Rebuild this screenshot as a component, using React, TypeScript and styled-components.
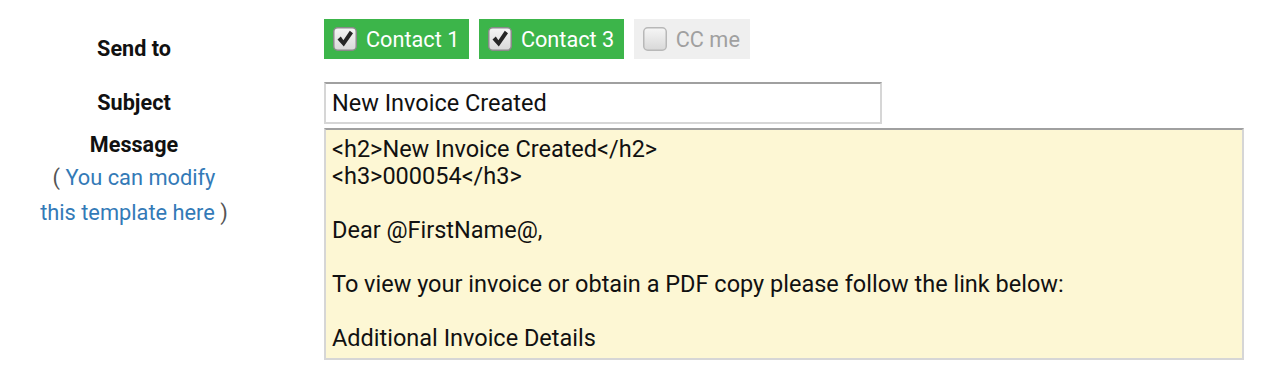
import React from "react";
import styled, { createGlobalStyle } from "styled-components";

const GlobalStyle = createGlobalStyle`
  body {
    margin: 0;
    background: #ffffff;
    font-family: Roboto, "Liberation Sans", Arial, sans-serif;
  }
`;

const MESSAGE = [
  "<h2>New Invoice Created</h2>",
  "<h3>000054</h3>",
  "",
  "Dear @FirstName@,",
  "",
  "To view your invoice or obtain a PDF copy please follow the link below:",
  "",
  "Additional Invoice Details",
].join("\n");

const recipients = [
  { name: "Contact 1", checked: true },
  { name: "Contact 3", checked: true },
  { name: "CC me", checked: false },
];

const CheckBox = ({ checked }: { checked: boolean }) => (
  <svg width="24" height="24" viewBox="0 0 24 24">
    <defs>
      <linearGradient id="cbFill" x1="0" y1="0" x2="0" y2="1">
        <stop offset="0" stopColor="#f6f6f6" />
        <stop offset="1" stopColor="#d8d8d8" />
      </linearGradient>
    </defs>
    <rect
      x="0.75"
      y="0.75"
      width="22.5"
      height="22.5"
      rx="4"
      fill="url(#cbFill)"
      stroke={checked ? "#8a8a8a" : "#b8b8b8"}
      strokeWidth="1.5"
    />
    {checked && (
      <path
        d="M4.5 12.5 L7.8 9.6 L10.4 13.2 L16.8 3.8 L20 6.2 L10.8 19.5 Z"
        fill="#262626"
      />
    )}
  </svg>
);

const App = () => {
  return (
    <>
      <GlobalStyle />
      <Form>
        <Row>
          <Label $offset={15}>Send to</Label>
          <Recipients>
            {recipients.map((r) => (
              <Recipient key={r.name} $checked={r.checked}>
                <CheckBox checked={r.checked} />
                {r.name}
              </Recipient>
            ))}
          </Recipients>
        </Row>
        <Row $gap={18} $center>
          <Label>Subject</Label>
          <SubjectInput defaultValue="New Invoice Created" />
        </Row>
        <Row $gap={4}>
          <Label $offset={2}>
            Message
            <Hint>
              ( <a href="#">You can modify</a>
              <br />
              <a href="#">this template here</a> )
            </Hint>
          </Label>
          <MessageBox readOnly defaultValue={MESSAGE} />
        </Row>
      </Form>
    </>
  );
};

export default App;

const Form = styled.form`
  padding-top: 19px;
  width: 1273px;
  height: 372px;
  box-sizing: border-box;
  overflow: hidden;
`;

const Row = styled.div<{ $gap?: number; $center?: boolean }>`
  display: grid;
  grid-template-columns: 268px 1fr;
  column-gap: 56px;
  margin-top: ${({ $gap }) => ($gap || 0) + "px"};
  align-items: ${({ $center }) => ($center ? "center" : "start")};
`;

const Label = styled.div<{ $offset?: number }>`
  padding-top: ${({ $offset }) => ($offset || 0) + "px"};
  text-align: center;
  font-size: 21.6px;
  font-weight: 700;
  line-height: 30px;
  color: #111;
`;

const Hint = styled.div`
  font-size: 21.8px;
  font-weight: 400;
  line-height: 35px;
  color: #555;

  a {
    color: #337ab7;
    text-decoration: none;
  }
`;

const Recipients = styled.div`
  display: flex;
  gap: 9.5px;
`;

const Recipient = styled.label<{ $checked: boolean }>`
  display: flex;
  align-items: center;
  gap: 9px;
  height: 40px;
  padding: 0 10px 0 9px;
  font-size: 21.7px;
  background: ${({ $checked }) => ($checked ? "#3cb54a" : "#efefef")};
  color: ${({ $checked }) => ($checked ? "#ffffff" : "#a0a0a0")};
  box-sizing: border-box;
`;

const SubjectInput = styled.input`
  width: 558px;
  height: 42px;
  box-sizing: border-box;
  padding: 0 6px;
  font-family: inherit;
  font-size: 23.5px;
  color: #111;
  background: #fff;
  border: 2px solid #d6d6d6;
  border-top-color: #a0a0a0;
  outline: none;
`;

const MessageBox = styled.textarea`
  width: 920px;
  height: 232px;
  box-sizing: border-box;
  margin: 0;
  padding: 6px 6px;
  font-family: inherit;
  font-size: 23.5px;
  line-height: 27px;
  color: #111;
  background: #fdf7d4;
  border: 2px solid #d6d6d6;
  border-top-color: #a0a0a0;
  resize: none;
  overflow: hidden;
  outline: none;
`;
